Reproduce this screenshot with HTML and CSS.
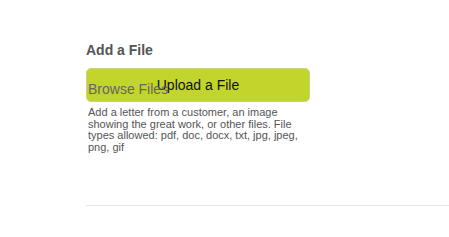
FILE: index.html
```html
<!DOCTYPE html>
<html>
<head>
<meta charset="utf-8">
<link rel="stylesheet" href="styles.css">
</head>
<body>
<section class="upload-section">
  <h3 class="upload-title">Add a File</h3>
  <div class="upload-box">
    <span class="browse-label">Browse Files</span>
    <span class="upload-btn">Upload a File</span>
  </div>
  <p class="upload-help">Add a letter from a customer, an image showing the great work, or other files. File types allowed: pdf, doc, docx, txt, jpg, jpeg, png, gif</p>
  <div class="divider"></div>
</section>
</body>
</html>
```
FILE: styles.css
```css
html, body {
  margin: 0;
  padding: 0;
  background: #fff;
}
body {
  font-family: "Liberation Sans", Arial, sans-serif;
}
.upload-section {
  padding: 42px 0 0 86px;
}
.upload-title {
  margin: 0;
  font-size: 14px;
  line-height: 16px;
  font-weight: bold;
  color: #555;
}
.upload-box {
  position: relative;
  margin-top: 10px;
  width: 222px;
  height: 32px;
  background: #c2d52d;
  border: 1px solid #c9d27e;
  border-radius: 5px;
  display: flex;
  align-items: center;
  justify-content: center;
}
.upload-btn {
  font-size: 14px;
  line-height: 16px;
  color: #111;
  margin-top: -1px;
}
.browse-label {
  position: absolute;
  left: 1px;
  top: 12px;
  font-size: 14px;
  line-height: 16px;
  color: #666;
}
.upload-help {
  margin: 5px 0 0 2px;
  width: 218px;
  font-size: 11px;
  line-height: 11.5px;
  color: #555;
}
.divider {
  margin-top: 52px;
  height: 1px;
  background: #e6e6e6;
}
```
